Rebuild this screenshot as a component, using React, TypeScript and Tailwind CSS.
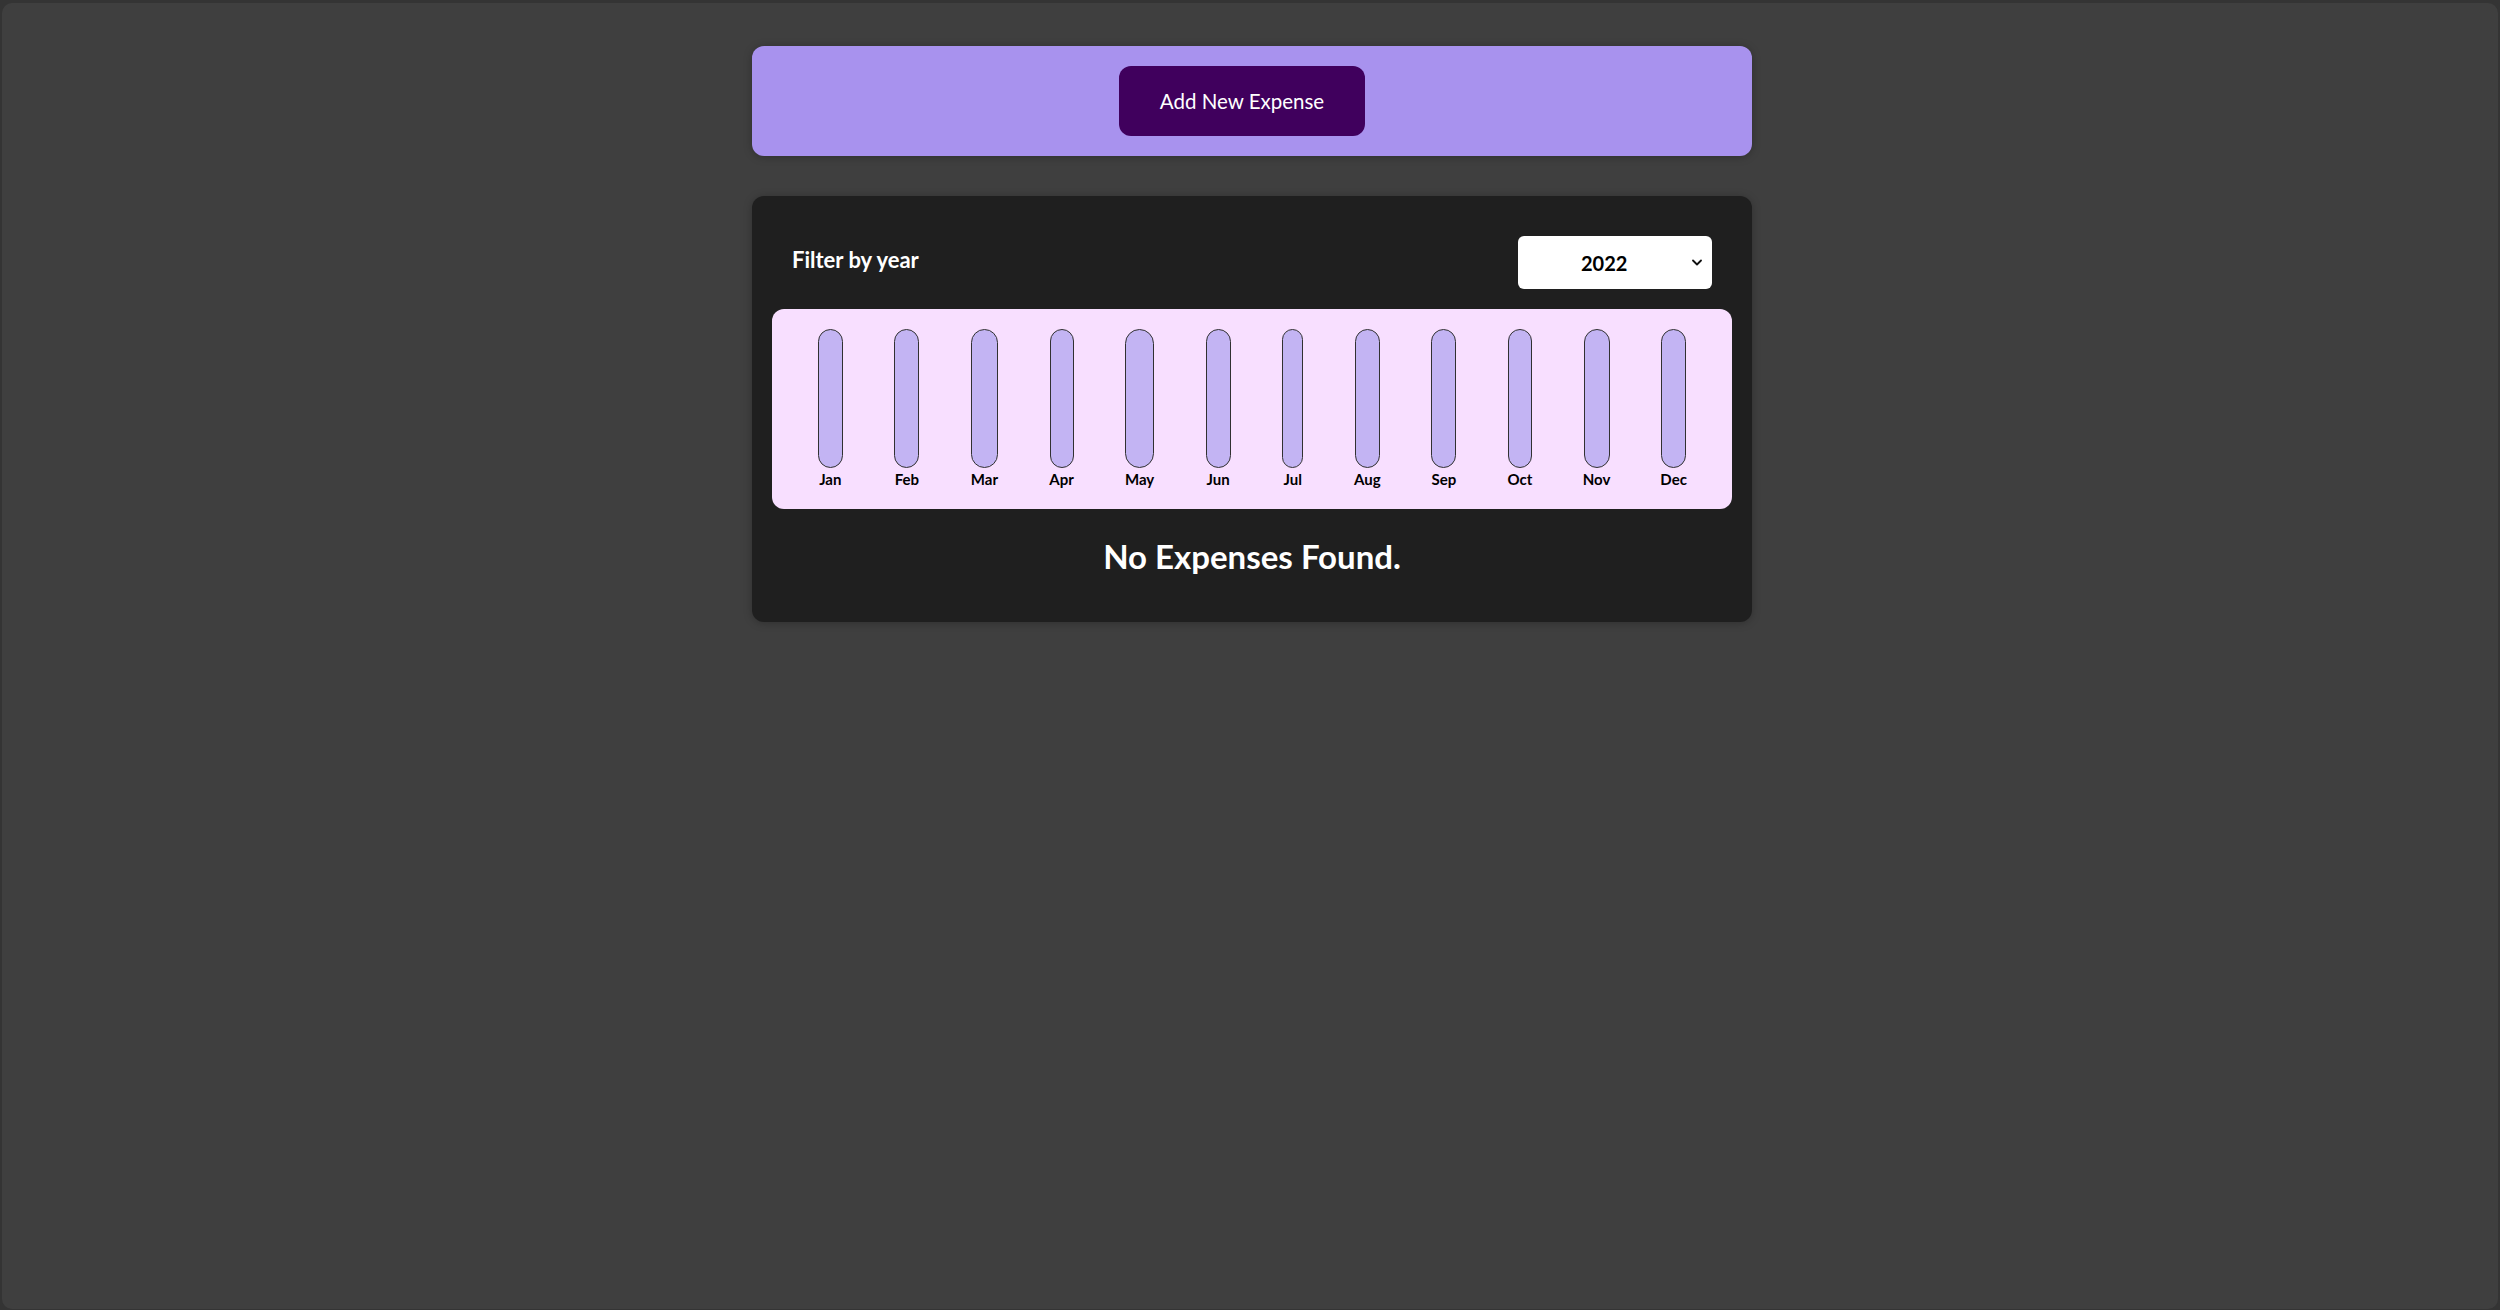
import React from "react";

const months: { name: string; w: number }[] = [
  { name: "Jan", w: 25 },
  { name: "Feb", w: 25 },
  { name: "Mar", w: 27 },
  { name: "Apr", w: 24 },
  { name: "May", w: 29 },
  { name: "Jun", w: 25 },
  { name: "Jul", w: 21 },
  { name: "Aug", w: 25 },
  { name: "Sep", w: 25 },
  { name: "Oct", w: 24 },
  { name: "Nov", w: 26 },
  { name: "Dec", w: 25 },
];

export default function App() {
  return (
    <div
      className="h-[1310px] w-full bg-[#343434] pt-[3px] px-[2px] pb-[1px]"
      style={{ fontFamily: "Lato, 'Noto Sans', sans-serif" }}
    >
      <div className="h-full rounded-[10px] bg-[#3f3f3f] pl-[4px] pt-[43px]">
        {/* New expense card */}
        <div className="mx-auto w-[1000px] rounded-[12px] bg-[#a892ee] p-[20px] shadow-[0_1px_8px_rgba(0,0,0,0.25)]">
          <div className="flex justify-center pr-[20px]">
            <button className="h-[70px] w-[246px] rounded-[12px] bg-[#40005d] text-[20.5px] text-white">
              Add New Expense
            </button>
          </div>
        </div>

        {/* Expenses card */}
        <div className="mx-auto mt-[40px] w-[1000px] rounded-[12px] bg-[#1f1f1f] p-[20px] shadow-[0_1px_8px_rgba(0,0,0,0.25)]">
          <div className="px-[20px] text-white">
            <div className="my-[20px] flex items-center justify-between">
              <span className="mb-[6px] text-[22px] font-bold leading-[30px]">Filter by year</span>
              <div className="relative h-[53px] w-[194px] rounded-[6px] bg-white">
                <div className="flex h-full items-center pl-[63px] text-[20px] font-bold text-black">
                  2022
                </div>
                <svg
                  className="absolute right-[10px] top-[23px]"
                  width="10"
                  height="7"
                  viewBox="0 0 10 7"
                  fill="none"
                >
                  <path d="M1 1.5 L5 5.5 L9 1.5" stroke="#111" strokeWidth="1.8" strokeLinecap="round" strokeLinejoin="round" />
                </svg>
              </div>
            </div>
          </div>

          <div className="flex h-[200px] justify-around rounded-[12px] bg-[#f8dfff] p-[20px]">
            {months.map((m) => (
              <div key={m.name} className="flex h-full flex-col items-center" style={{ width: m.w }}>
                <div className="w-full flex-1 rounded-full border border-[#313131] bg-[#c3b4f3]" />
                <div className="h-[21px] whitespace-nowrap text-center text-[15px] font-bold leading-[22px] text-black">
                  {m.name}
                </div>
              </div>
            ))}
          </div>

          <h2 className="mb-[27px] mt-[28px] text-center text-[33px] font-bold leading-[38px] text-white">
            No Expenses Found.
          </h2>
        </div>
      </div>
    </div>
  );
}
